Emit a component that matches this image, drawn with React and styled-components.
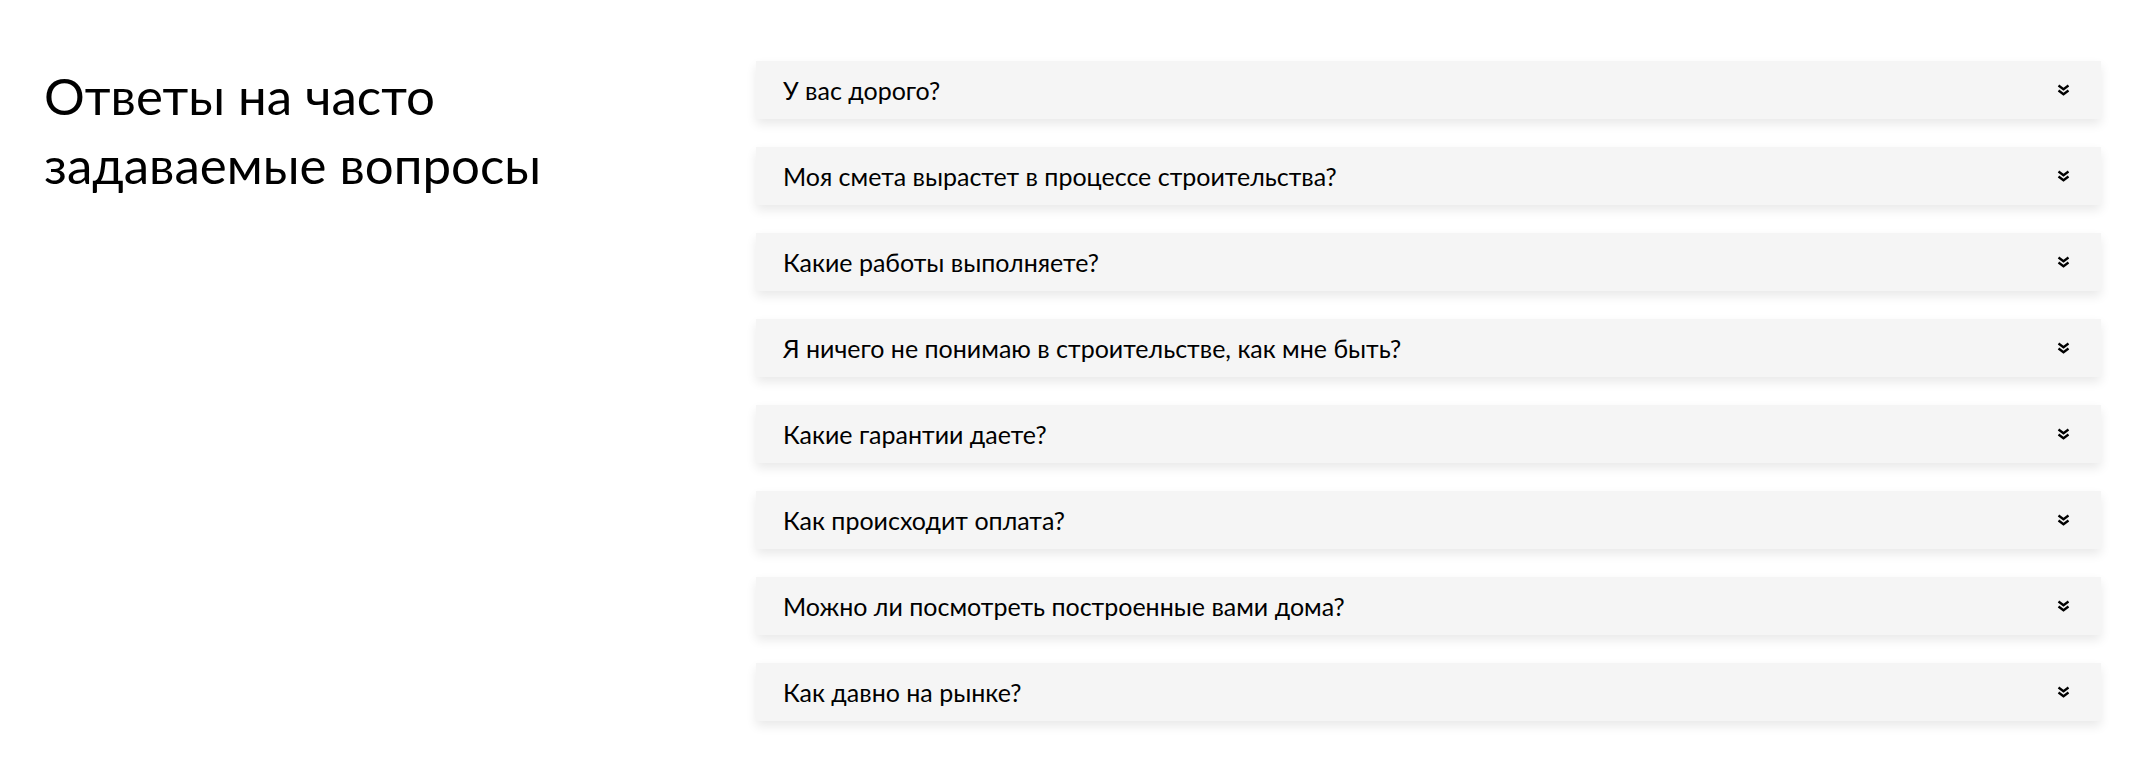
import React from "react";
import styled, { createGlobalStyle } from "styled-components";

const GlobalStyle = createGlobalStyle`
  html, body {
    margin: 0;
    padding: 0;
    background: #ffffff;
  }
  body {
    font-family: Lato, "Noto Sans", sans-serif;
    color: #000;
  }
`;

const Section = styled.section`
  display: flex;
  align-items: flex-start;
  padding: 61px 50px 57px 44px;
  min-height: 778px;
  box-sizing: border-box;
`;

const TitleCol = styled.div`
  width: 712px;
  flex-shrink: 0;
`;

const Title = styled.h2`
  margin: 0;
  font-weight: 400;
  font-size: 51px;
  line-height: 69px;
  color: #000;
`;

const List = styled.div`
  flex: 1;
  display: flex;
  flex-direction: column;
  gap: 28px;
`;

const Item = styled.div`
  height: 58px;
  display: flex;
  align-items: center;
  justify-content: space-between;
  padding: 0 31px 0 27px;
  background: #f5f5f5;
  box-shadow: 0 5px 10px rgba(0, 0, 0, 0.09);
  cursor: pointer;
`;

const Question = styled.span`
  font-size: 25px;
  color: #000;
`;

const Chevron = styled.svg`
  width: 13px;
  height: 12px;
  flex-shrink: 0;
`;

const questions = [
  "У вас дорого?",
  "Моя смета вырастет в процессе строительства?",
  "Какие работы выполняете?",
  "Я ничего не понимаю в строительстве, как мне быть?",
  "Какие гарантии даете?",
  "Как происходит оплата?",
  "Можно ли посмотреть построенные вами дома?",
  "Как давно на рынке?",
];

const App = () => {
  return (
    <>
      <GlobalStyle />
      <Section>
        <TitleCol>
          <Title>
            Ответы на часто
            <br />
            задаваемые вопросы
          </Title>
        </TitleCol>
        <List>
          {questions.map((q) => (
            <Item key={q}>
              <Question>{q}</Question>
              <Chevron viewBox="0 0 13 12">
                <polyline points="1.5,1.5 6.5,5.2 11.5,1.5" fill="none" stroke="#000" strokeWidth="2.3" />
                <polyline points="1.5,6.5 6.5,10.2 11.5,6.5" fill="none" stroke="#000" strokeWidth="2.3" />
              </Chevron>
            </Item>
          ))}
        </List>
      </Section>
    </>
  );
};

export default App;
